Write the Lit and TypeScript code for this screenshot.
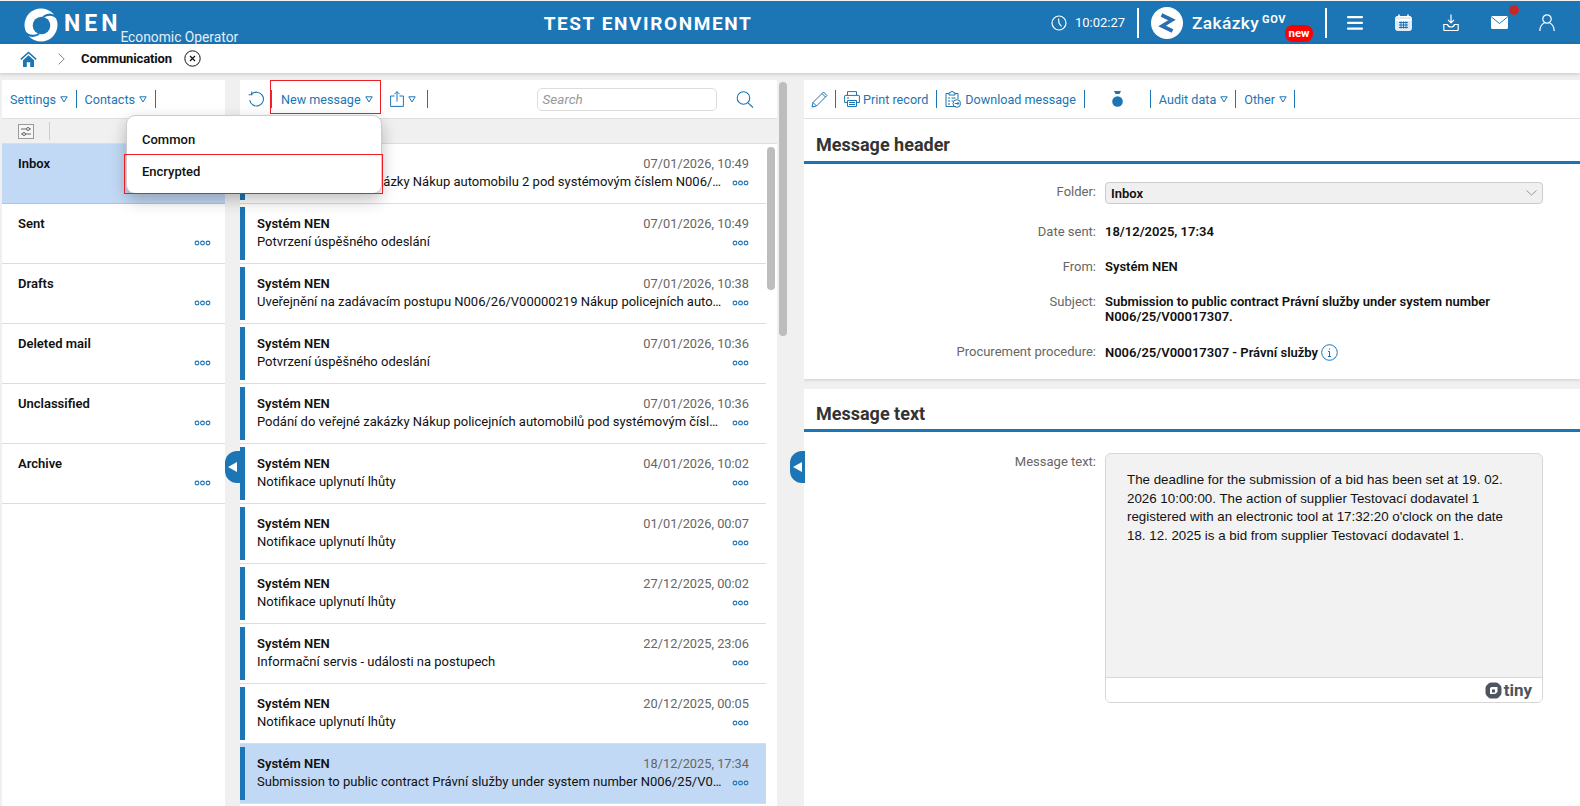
import { LitElement, html, css } from "lit";
import { customElement } from "lit/decorators.js";

const tri = html`<svg class="tri" width="8" height="7" viewBox="0 0 8 7"><path d="M.8.8h6.400L4 6z" fill="none" stroke="#1c75b4" stroke-width="1"/></svg>`;
const dots = html`<svg class="dots" width="17" height="6" viewBox="0 0 17 6" fill="none" stroke="#1c75b4" stroke-width="1.1"><circle cx="3" cy="3" r="1.9"/><circle cx="8.5" cy="3" r="1.9"/><circle cx="14" cy="3" r="1.9"/></svg>`;

const folders = ["Inbox", "Sent", "Drafts", "Deleted mail", "Unclassified", "Archive"];
const messages: [string, string][] = [
  ["07/01/2026, 10:49", "Podání do veřejné zakázky Nákup automobilu 2 pod systémovým číslem N006/26/V00000220"],
  ["07/01/2026, 10:49", "Potvrzení úspěšného odeslání"],
  ["07/01/2026, 10:38", "Uveřejnění na zadávacím postupu N006/26/V00000219 Nákup policejních automobilů a další"],
  ["07/01/2026, 10:36", "Potvrzení úspěšného odeslání"],
  ["07/01/2026, 10:36", "Podání do veřejné zakázky Nákup policejních automobilů pod systémovým číslem N006/26"],
  ["04/01/2026, 10:02", "Notifikace uplynutí lhůty"],
  ["01/01/2026, 00:07", "Notifikace uplynutí lhůty"],
  ["27/12/2025, 00:02", "Notifikace uplynutí lhůty"],
  ["22/12/2025, 23:06", "Informační servis - události na postupech"],
  ["20/12/2025, 00:05", "Notifikace uplynutí lhůty"],
  ["18/12/2025, 17:34", "Submission to public contract Právní služby under system number N006/25/V00017307."],
];

@customElement("app-root")
export class AppRoot extends LitElement {
  static styles = css`
    :host { display: block; width: 1580px; height: 806px; overflow: hidden; background: #f0f0f0; font-family: Roboto, "Noto Sans", sans-serif; font-size: 13px; color: #111; position: relative; }
    * { box-sizing: border-box; }
    svg { display: block; flex: none; }
    .top { margin-top: 1px; background: #1c75b4; color: #fff; display: flex; align-items: center; position: relative; height: 43px; }
    .logo { margin-left: 24px; margin-top: 4px; }
    .nen { font-weight: 700; font-size: 23px; letter-spacing: 4px; margin-left: 6px; margin-top: 2px; line-height: 28px; }
    .eo { font-size: 13.8px; color: #e4eef6; font-weight: 400; align-self: flex-end; margin-left: -1px; line-height: 16px; position: relative; top: 1px; white-space: nowrap; }
    .env { position: absolute; left: 0; width: 1296px; text-align: center; font-weight: 700; font-size: 19px; letter-spacing: 1.6px; top: 12px; line-height: 22px; }
    .tr { margin-left: auto; display: flex; align-items: center; height: 100%; }
    .time { margin-left: 8px; font-size: 13px; width: 62px; }
    .wsep { width: 2px; height: 30px; background: #fff; }
    .zk { margin-left: 12px; margin-right: 9px; }
    .zak { font-size: 17.4px; font-weight: 500; letter-spacing: .35px; line-height: 22px; }
    .gov { font-size: 11px; font-weight: 700; letter-spacing: .6px; margin-left: 3px; position: relative; top: -3px; width: 27px; }
    .new { position: absolute; left: 1285px; top: 24px; width: 28px; height: 17px; border-radius: 8px; background: #f00; color: #fff; font-size: 11.5px; font-weight: 700; text-align: center; line-height: 17px; }
    .zwrap { width: 133px; display: flex; align-items: center; }
    .ticons { display: flex; align-items: center; margin-left: 20px; margin-right: 25px; gap: 31.5px; position: relative; }
    .mdot { position: absolute; left: 162px; top: -9px; width: 10px; height: 10px; border-radius: 50%; background: #c62828; }

    .crumb { height: 29px; background: #fff; display: flex; align-items: center; box-shadow: 0 1px 4px rgba(0,0,0,.18); position: relative; }
    .crumb .home { margin-left: 20px; }
    .crumb .chev { margin-left: 21px; }
    .crumb b { margin-left: 16px; font-weight: 700; font-size: 13px; letter-spacing: -.12px; }
    .crumb .x { margin-left: 12px; }

    .main { display: grid; grid-template-columns: 223px 537px 776px; margin-top: 7px; height: 726px; margin-left: 2px; position: relative; }
    .col { background: #fff; height: 100%; overflow: hidden; }
    .col.mid { margin-left: 15px; width: 537px; }
    .col.right { margin-left: 42px; width: 776px; background: #f0f0f0; }
    .bar { height: 39px; border-bottom: 1px solid #e0e0e0; display: flex; align-items: center; color: #1c75b4; background: #fff; white-space: nowrap; font-size: 12.6px; }
    .sep { width: 1px; height: 18px; background: #1c75b4; flex: none; }
    .tri { margin-left: 4px; margin-top: 1px; }

    .left .bar { padding-left: 8px; }
    .left .bar .c { margin: 0 8px 0 7.5px; }
    .filter { height: 25px; border-bottom: 1px solid #ddd; background: #f0f0f0; display: flex; align-items: center; padding-left: 16px; }
    .filter .sep { background: #ccc; margin-left: 15px; }
    .fold { height: 60px; border-bottom: 1px solid #ddd; padding: 12px 0 0 16px; position: relative; background: #fff; line-height: 16px; font-weight: 600; }
    .fold.on { background: #c2d9f5; border-bottom-color: #a9c6e6; }
    .fold .dots { position: absolute; left: 192px; top: 36px; }

    .mid .bar .refresh { margin-left: 8px; margin-right: 6px; }
    .mid .label { margin-left: 9px; }
    .search { margin-left: 109px; width: 180px; height: 23px; border: 1px solid #ddd; border-radius: 5px; font-style: italic; color: #999; padding-left: 5px; line-height: 21px; font-size: 13.5px; }
    .strip { height: 25px; background: #f0f0f0; border-bottom: 1px solid #ddd; }
    .listwrap { display: flex; background: #fff; height: 662px; }
    .list { width: 526px; flex: none; }
    .vs { background: #bdbdbd; border-radius: 4px; width: 8px; height: 143px; margin: 3px 0 0 1px; }
    .msg { height: 60px; border-bottom: 1px solid #ddd; display: flex; padding: 3px 0; background: #fff; position: relative; }
    .msg.on { background: #c2d9f5; }
    .stripe { width: 5px; background: #1c75b4; flex: none; }
    .mb { padding: 8px 17px 0 12px; width: 100%; min-width: 0; }
    .r1 { display: flex; justify-content: space-between; line-height: 18px; }
    .r1 b { font-weight: 600; }
    .r1 span { color: #666; font-size: 12.8px; }
    .subj { line-height: 18px; width: 465px; white-space: nowrap; overflow: hidden; text-overflow: ellipsis; }
    .msg .dots { position: absolute; left: 492px; top: 36px; }

    .right .bar { padding-left: 7px; }
    .card { background: #fff; }
    .h2 { font-size: 18px; font-weight: 700; color: #333; padding-left: 12px; height: 45px; line-height: 52px; border-bottom: 3px solid #1c75b4; }
    .fields { height: 215px; padding-top: 20px; box-shadow: 0 1px 3px rgba(0,0,0,.15); }
    .row { display: grid; grid-template-columns: 292px 438px; column-gap: 9px; line-height: 15px; }
    .row label { text-align: right; color: #666; }
    .row .v { font-weight: 600; display: flex; align-items: center; }
    .sel { height: 22px; width: 438px; border: 1px solid #ccc; border-radius: 4px; background: #f0f0f0; padding: 0 5px; font-weight: 600; display: flex; align-items: center; justify-content: space-between; margin-top: -2px; }
    .r-date, .r-from, .r-sub, .r-proc { margin-top: 20px; }
    .sub { display: block !important; line-height: 15px; }
    .card2 { margin-top: 10px; height: 417px; }
    .h2.b { height: 43px; line-height: 50px; }
    .ft { padding-top: 21px; display: grid; grid-template-columns: 292px 438px; column-gap: 9px; }
    .ft label { text-align: right; color: #666; line-height: 22px; margin-top: -2px; }
    .box { height: 250px; border: 1px solid #d6d6d6; border-radius: 6px; background: #f2f2f2; display: flex; flex-direction: column; overflow: hidden; }
    .box .txt { flex: 1; padding: 17px 24px 0 21px; line-height: 18.6px; font-family: "Liberation Sans", Arial, sans-serif; font-size: 13.33px; color: #111; }
    .box .foot { height: 25px; background: #fff; border-top: 1px solid #d6d6d6; display: flex; align-items: center; justify-content: flex-end; padding-right: 10px; gap: 2px; color: #4d5660; font-weight: 700; font-size: 17px; }

    .handle { position: absolute; width: 15px; height: 32px; background: #1c75b4; border-radius: 12px 0 0 12px; display: flex; align-items: center; justify-content: center; }
    .h1 { left: 225px; top: 451px; }
    .h2h { left: 790px; top: 451px; }
    .vs2 { position: absolute; left: 777px; top: 2px; width: 8px; height: 254px; background: #bdbdbd; border-radius: 4px; }
    .hl { position: absolute; border: 1px solid #ee1c25; pointer-events: none; }
    .hl1 { left: 270px; top: 80px; width: 111px; height: 34px; }
    .hl2 { left: 124px; top: 154px; width: 259px; height: 40px; }
    .menu { position: absolute; left: 126px; top: 115px; width: 256px; height: 79px; background: #fff; border: 1px solid #ccc; border-radius: 9px; box-shadow: 0 6px 16px rgba(0,0,0,.25); padding: 14px 15px; font-weight: 500; line-height: 20px; }
    .menu div + div { margin-top: 12px; }
  `;

  render() {
    return html`
      <div class="top">
        <svg class="logo" width="34" height="34" viewBox="0 0 34 34">
          <circle cx="17" cy="17" r="16.500" fill="#fff"/>
          <circle cx="17.500" cy="17.500" r="8.800" fill="#1c75b4"/>
          <path d="M34.500 11C29 5.500 24 5.500 19 9M-.5 23C5 29 10 29 15 26" fill="none" stroke="#1c75b4" stroke-width="2"/>
        </svg>
        <div class="nen">NEN</div><div class="eo">Economic Operator</div>
        <div class="env">TEST ENVIRONMENT</div>
        <div class="tr">
          <svg width="16" height="16" viewBox="0 0 16 16" fill="none" stroke="#fff" stroke-width="1.2"><circle cx="8" cy="8" r="7"/><path d="M7.500 3.500 8 8l2.500 3.500"/></svg>
          <div class="time">10:02:27</div>
          <div class="wsep"></div>
          <svg class="zk" width="32" height="32" viewBox="0 0 32 32"><circle cx="16" cy="16" r="16" fill="#fff"/><path d="M10.500 8 21 13 11 19l10.500 5" fill="none" stroke="#2a6db0" stroke-width="3.600"/></svg>
          <div class="zwrap"><span class="zak">Zakázky</span><span class="gov">GOV</span></div>
          <div class="wsep"></div>
          <div class="ticons">
            <svg width="16" height="14" viewBox="0 0 16 14" fill="#fff"><rect width="16" height="2.200" y="0" rx="1"/><rect width="16" height="2.200" y="5.800" rx="1"/><rect width="16" height="2.200" y="11.600" rx="1"/></svg>
            <svg width="17" height="17" viewBox="0 0 17 17" fill="none" stroke="#fff"><rect x=".7" y="2.500" width="15.600" height="13.800" rx="1.500" fill="#dceaf5"/><path d="M.7 6h15.600" stroke-width="2"/><path d="M4 .5v3M13 .5v3" stroke-width="1.600"/><path d="M4 8.500h9M4 11h9M4 13.500h9M6 7.500v7M8.500 7.500v7M11 7.500v7" stroke="#1c75b4" stroke-width="1"/></svg>
            <svg width="16" height="17" viewBox="0 0 16 17" fill="none" stroke="#fff" stroke-width="1.200"><path d="M8 .5v8M5 5.800 8 8.800l3-3M4.500 10.500H.8v5a1 1 0 0 0 1 1h12.400a1 1 0 0 0 1-1v-5h-3.700c-.5 2-1.500 2.500-3.500 2.500s-3-.5-3.500-2.500z"/></svg>
            <svg width="17" height="13" viewBox="0 0 17 13"><rect width="17" height="13" rx="1.500" fill="#fff"/><path d="M.5 1 8.500 7.500 16.500 1" fill="none" stroke="#1c75b4" stroke-width="1"/></svg>
            <svg width="16" height="17" viewBox="0 0 16 17" fill="none" stroke="#fff" stroke-width="1.200"><circle cx="8" cy="5" r="4.200"/><path d="M.8 17c0-4.500 2.500-7.500 4.700-8M15.200 17c0-4.500-2.500-7.500-4.700-8"/></svg>
            <div class="mdot"></div>
          </div>
        </div>
        <div class="new">new</div>
      </div>
      <div class="crumb">
        <svg class="home" width="17" height="16" viewBox="0 0 17 16"><path d="M.3 7.800 8.500.5l8.200 7.300-1 1.100L8.500 2.500 1.300 8.900z" fill="#1c75b4"/><path d="M3 9.200 8.500 4.200 14 9.200V16h-3.800v-4.800H6.800V16H3z" fill="#1c75b4"/></svg>
        <svg class="chev" width="7" height="12" viewBox="0 0 7 12"><path d="M.6.6 6.200 6 .6 11.400" fill="none" stroke="#888" stroke-width="1"/></svg>
        <b>Communication</b>
        <svg class="x" width="17" height="17" viewBox="0 0 17 17" fill="none" stroke="#111"><circle cx="8.500" cy="8.500" r="7.700" stroke-width="1"/><path d="M6 6l5 5M11 6l-5 5" stroke-width="1.200"/></svg>
      </div>

      <div class="main">
        <div class="col left">
          <div class="bar"><span>Settings</span>${tri}<span class="sep c"></span><span>Contacts</span>${tri}<span class="sep c"></span></div>
          <div class="filter">
            <svg width="16" height="15" viewBox="0 0 16 15" fill="none"><rect x=".5" y=".5" width="15" height="14" fill="#f6f6f6" stroke="#999"/><path d="M3 5h10M3 10h10" stroke="#666"/><circle cx="10" cy="5" r="1.500" fill="#f6f6f6" stroke="#666"/><circle cx="6" cy="10" r="1.500" fill="#f6f6f6" stroke="#666"/></svg>
            <span class="sep"></span>
          </div>
          ${folders.map((f, i) => html`<div class="fold ${i === 0 ? "on" : ""}">${f}${dots}</div>`)}
        </div>

        <div class="col mid">
          <div class="bar">
            <svg class="refresh" width="17" height="16" viewBox="0 0 16 15" fill="none" stroke="#1c75b4" stroke-width="1"><path d="M3.200 3.200A6.500 6.500 0 1 1 1.600 8.500"/><path d="M3.500 .5v3H.6"/></svg>
            <span class="sep"></span>
            <span class="label">New message</span>${tri}
            <svg style="margin-left:17px" width="14" height="16" viewBox="0 0 14 16" fill="none" stroke="#1c75b4" stroke-width="1"><path d="M4.500 5H.6v10.400h12.800V5H9.500M7 10.500V.8M4.300 3.300 7 .6l2.700 2.700"/></svg>
            ${tri}
            <span class="sep" style="margin-left:11px"></span>
            <div class="search">Search</div>
            <svg style="margin-left:19px" width="18" height="17" viewBox="0 0 18 17" fill="none" stroke="#1c75b4" stroke-width="1.100"><circle cx="7.500" cy="7" r="6.300"/><path d="m12 11.800 5 4.700"/></svg>
          </div>
          <div class="strip"></div>
          <div class="listwrap">
            <div class="list">
              ${messages.map((m, i) => html`<div class="msg ${i === 10 ? "on" : ""}">
                <div class="stripe"></div>
                <div class="mb">
                  <div class="r1"><b>Systém NEN</b><span>${m[0]}</span></div>
                  <div class="subj">${m[1]}</div>
                </div>
                ${dots}
              </div>`)}
            </div>
            <div class="vs"></div>
          </div>
        </div>

        <div class="col right">
          <div class="bar">
            <svg width="17" height="17" viewBox="0 0 17 17" fill="none" stroke="#1c75b4" stroke-width="1"><path d="M1 16l1-4.500L12.500 1l3.500 3.500L5.500 15zM2 11.500 5.500 15M11 2.500 14.500 6"/></svg>
            <span class="sep" style="margin:0 8px 0 7px"></span>
            <svg width="16" height="16" viewBox="0 0 16 16" fill="none" stroke="#1c75b4"><path d="M3.500 4.500V.6h9v3.900M3.500 11.500H.6V5a.6.6 0 0 1 .6-.6h13.600a.6.600 0 0 1 .6.6v6.500h-2.900M3.500 9.500h9v6h-9zM5 11.500h6M5 13.500h6M3 7h2"/></svg>
            <span style="margin-left:3px">Print record</span>
            <span class="sep" style="margin:0 8px"></span>
            <svg width="16" height="17" viewBox="0 0 16 17" fill="none" stroke="#1c75b4"><path d="M11 15.500H1V2.500h3M10 2.500h3V8M4 2.500V1.800h1.500a1.500 1.500 0 0 1 3 0H10V4H4zM3 7h2M3 10h2M3 13h2M6.500 7h4M6.500 10h1.500"/><circle cx="11.800" cy="12.500" r="3.800"/><path d="M9.800 12.500h4M12.500 11l1.400 1.500-1.400 1.500"/></svg>
            <span style="margin-left:4px">Download message</span>
            <span class="sep" style="margin-left:8px"></span>
            <svg style="margin-left:27px" width="11" height="16" viewBox="0 0 11 16" fill="#1c75b4"><path d="M2 0h7L7.500 3h-4z"/><circle cx="5.500" cy="10.500" r="5.300"/></svg>
            <span class="sep" style="margin-left:27px"></span>
            <span style="margin-left:8px">Audit data</span>${tri}
            <span class="sep" style="margin-left:7px"></span>
            <span style="margin-left:8px">Other</span>${tri}
            <span class="sep" style="margin-left:7px"></span>
          </div>
          <div class="card">
            <div class="h2">Message header</div>
            <div class="fields">
              <div class="row"><label>Folder:</label><div class="sel">Inbox<svg width="11" height="6" viewBox="0 0 11 6"><path d="M.5.500 5.500 5l5-4.500" fill="none" stroke="#999"/></svg></div></div>
              <div class="row r-date"><label>Date sent:</label><div class="v">18/12/2025, 17:34</div></div>
              <div class="row r-from"><label>From:</label><div class="v">Systém NEN</div></div>
              <div class="row r-sub"><label>Subject:</label><div class="v sub">Submission to public contract Právní služby under system number N006/25/V00017307.</div></div>
              <div class="row r-proc"><label>Procurement procedure:</label><div class="v">N006/25/V00017307 - Právní služby
                <svg style="margin-left:3px" width="17" height="17" viewBox="0 0 17 17" fill="none" stroke="#1c75b4"><circle cx="8.500" cy="8.500" r="7.800"/><path d="M8.500 7.500v5M7 7.500h1.500M7 12.500h3M8.500 4.500v1.200"/></svg>
              </div></div>
            </div>
          </div>
          <div class="card card2">
            <div class="h2 b">Message text</div>
            <div class="ft">
              <label>Message text:</label>
              <div class="box">
                <div class="txt">The deadline for the submission of a bid has been set at 19. 02. 2026 10:00:00. The action of supplier Testovací dodavatel 1 registered with an electronic tool at 17:32:20 o'clock on the date 18. 12. 2025 is a bid from supplier Testovací dodavatel 1.</div>
                <div class="foot">
                  <svg width="17" height="17" viewBox="0 0 17 17"><path fill="#4d5660" fill-rule="evenodd" d="M6 .5h5q2 0 3 1.500l1.500 1.500q1 1 1 3v4q0 2-1 3L14 15q-1 1.500-3 1.500H6q-2 0-3-1.500l-1.500-1.500q-1-1-1-3v-4q0-2 1-3L3 2Q4 .5 6 .5zM5 6v6h5l2.500-2V5h-6z"/><rect x="7" y="7.500" width="3" height="3" fill="#4d5660"/></svg>
                  <span>tiny</span>
                </div>
              </div>
            </div>
          </div>
        </div>
        <div class="vs2"></div>
      </div>

      <div class="handle h1"><svg width="9" height="10" viewBox="0 0 9 10"><path d="M0 5 9 0v10z" fill="#fff"/></svg></div>
      <div class="handle h2h"><svg width="9" height="10" viewBox="0 0 9 10"><path d="M0 5 9 0v10z" fill="#fff"/></svg></div>
      <div class="menu"><div>Common</div><div>Encrypted</div></div>
      <div class="hl hl1"></div>
      <div class="hl hl2"></div>
    `;
  }
}
